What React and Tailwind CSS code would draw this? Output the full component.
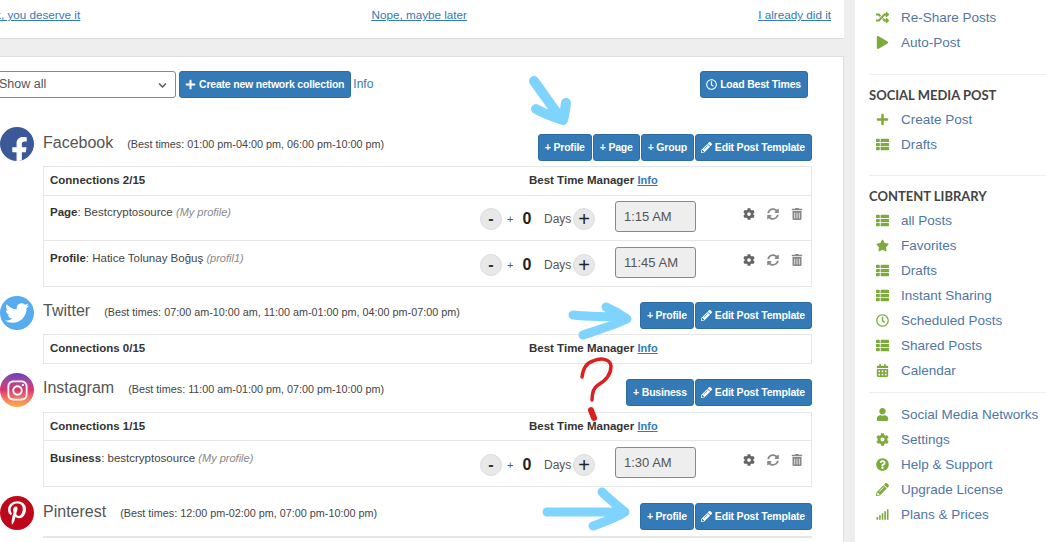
import React from 'react'
import {
  FaRandom, FaPlay, FaPlus, FaThList, FaStar, FaRegClock, FaCalendarAlt, FaUser, FaCog,
  FaQuestionCircle, FaPencilAlt, FaSignal, FaSyncAlt, FaTrashAlt, FaFacebookF, FaTwitter,
  FaInstagram, FaPinterestP, FaChevronDown,
} from 'react-icons/fa'

const networks = [
  {
    name: 'Facebook', times: '01:00 pm-04:00 pm, 06:00 pm-10:00 pm', used: '2/15',
    icon: <FaFacebookF className="text-white text-[27px] translate-x-[2px] translate-y-[6px]" />,
    iconBg: 'bg-[#3b5998]', head: 'h-[35px] mb-[4px]', titleTop: 'mt-[7px]', timesTop: 'mt-[10px]', btnBottom: 'mb-[1px]', hdr: 'h-[28px]', buttons: ['+ Profile', '+ Page', '+ Group'],
    rows: [
      { type: 'Page', name: 'Bestcryptosource', note: 'My profile', time: '1:15 AM', size: 'h-[45px] pt-[8px]' },
      { type: 'Profile', name: 'Hatice Tolunay Boğuş', note: 'profil1', time: '11:45 AM', size: 'h-[46px] pt-[9px]' },
    ],
  },
  {
    name: 'Twitter', times: '07:00 am-10:00 am, 11:00 am-01:00 pm, 04:00 pm-07:00 pm', used: '0/15',
    icon: <FaTwitter className="text-white text-[24px]" />,
    iconBg: 'bg-[#55acee]', head: 'h-[34px] mb-[4px]', titleTop: 'mt-[6px]', timesTop: 'mt-[9px]', btnBottom: 'mb-[1px]', hdr: 'h-[28px]', buttons: ['+ Profile'], rows: [],
  },
  {
    name: 'Instagram', times: '11:00 am-01:00 pm, 07:00 pm-10:00 pm', used: '1/15',
    icon: <FaInstagram className="text-white text-[23px]" />,
    iconBg: 'bg-gradient-to-t from-[#fcb045] via-[#e1306c] to-[#6a3fbf]', head: 'h-[35px] mb-[4px]', titleTop: 'mt-[6px]', timesTop: 'mt-[9px]', btnBottom: 'mb-[2px]', hdr: 'h-[27px]', buttons: ['+ Business'],
    rows: [{ type: 'Business', name: 'bestcryptosource', note: 'My profile', time: '1:30 AM', size: 'h-[46px] pt-[9px]' }],
  },
  {
    name: 'Pinterest', times: '12:00 pm-02:00 pm, 07:00 pm-10:00 pm', used: null,
    icon: <FaPinterestP className="text-white text-[24px]" />,
    iconBg: 'bg-[#bd081c]', head: 'h-[35px] mb-[5px]', titleTop: 'mt-[7px]', timesTop: 'mt-[10px]', btnBottom: 'mb-[1px]', buttons: ['+ Profile'], rows: [],
  },
]

const sidebar = [
  {
    gap: 'pb-[19px] mb-[9px] border-b',
    items: [
      { icon: FaRandom, label: 'Re-Share Posts' },
      { icon: FaPlay, label: 'Auto-Post' },
    ],
  },
  {
    title: 'SOCIAL MEDIA POST',
    gap: 'pb-[18px] mb-[9px] border-b',
    items: [
      { icon: FaPlus, label: 'Create Post' },
      { icon: FaThList, label: 'Drafts' },
    ],
  },
  {
    title: 'CONTENT LIBRARY',
    gap: 'pb-[9px] mb-[9px] border-b',
    items: [
      { icon: FaThList, label: 'all Posts' },
      { icon: FaStar, label: 'Favorites' },
      { icon: FaThList, label: 'Drafts' },
      { icon: FaThList, label: 'Instant Sharing' },
      { icon: FaRegClock, label: 'Scheduled Posts' },
      { icon: FaThList, label: 'Shared Posts' },
      { icon: FaCalendarAlt, label: 'Calendar' },
    ],
  },
  {
    gap: '',
    items: [
      { icon: FaUser, label: 'Social Media Networks' },
      { icon: FaCog, label: 'Settings' },
      { icon: FaQuestionCircle, label: 'Help & Support' },
      { icon: FaPencilAlt, label: 'Upgrade License' },
      { icon: FaSignal, label: 'Plans & Prices' },
    ],
  },
]

function BlueButton({ children, className = 'pl-[6px]' }) {
  return (
    <button className={`h-[27px] pr-[6px] flex items-center gap-[3px] whitespace-nowrap bg-[#337ab7] border border-[#2e6da4] rounded-[3px] text-white text-[10.5px] font-bold tracking-[-0.2px] ${className}`}>
      {children}
    </button>
  )
}

function ConnectionRow({ row }) {
  return (
    <div className={`flex border-t border-[#e6e6e6] text-[11.5px] ${row.size}`}>
      <div className="w-[436px] pl-[6px] text-[#444]">
        <b className="text-[#333]">{row.type}</b>: {row.name} <i className="text-[11px] text-[#888]">({row.note})</i>
      </div>
      <div className="flex items-center self-start mt-[4px] h-[22px]">
        <span className="w-[22px] h-[22px] flex items-center justify-center rounded-full bg-[#e8e8e8] border border-[#ddd] text-[16px] font-bold text-[#333]">-</span>
        <span className="ml-[5px] w-[8px] text-[11px] text-[#555]">+</span>
        <span className="ml-[6px] w-[12px] text-center text-[16px] font-bold text-[#222]">0</span>
        <span className="ml-[11px] w-[29px] text-[12px] text-[#555]">Days</span>
        <span className="w-[22px] h-[22px] flex items-center justify-center rounded-full bg-[#e8e8e8] border border-[#ddd] text-[20px] leading-none text-[#222]">+</span>
      </div>
      <div className="ml-[20px] -mt-[3px] w-[81px] h-[31px] pl-[8px] flex items-center bg-[#eee] border border-[#888] rounded-[3px] text-[13px] text-[#555]">
        {row.time}
      </div>
      <div className="ml-[47px] mt-[3px] flex items-center gap-[12px] h-[14px] text-[#888]">
        <FaCog className="text-[12px] text-[#666]" />
        <FaSyncAlt className="text-[12px]" />
        <FaTrashAlt className="text-[12px]" />
      </div>
    </div>
  )
}

function NetworkSection({ network }) {
  return (
    <section className="mb-[9px]">
      <div className={`flex items-end justify-between pr-[31px] ${network.head}`}>
        <div className="flex items-start h-full">
          <span className={`w-[34px] h-[34px] flex items-center justify-center overflow-hidden rounded-full ${network.iconBg}`}>
            {network.icon}
          </span>
          <span className={`ml-[9px] text-[16px] leading-[18px] text-[#555] ${network.titleTop}`}>{network.name}</span>
          <span className={`ml-[14px] text-[10.8px] leading-[14px] text-[#444] ${network.timesTop}`}>(Best times: {network.times})</span>
        </div>
        <div className={`flex gap-[1px] ${network.btnBottom}`}>
          {network.buttons.map(label => <BlueButton key={label}>{label}</BlueButton>)}
          <BlueButton className="pl-[5px]"><FaPencilAlt className="text-[11px]" /> Edit Post Template</BlueButton>
        </div>
      </div>
      <div className="ml-[43px] mr-[31px] border border-[#e6e6e6]">
        {network.used && (
          <div className={`flex items-center text-[11.5px] font-bold text-[#333] ${network.hdr}`}>
            <span className="w-[485px] pl-[6px]">Connections {network.used}</span>
            <span>Best Time Manager <a href="#" className="text-[11px] text-[#337ab7] underline">Info</a></span>
          </div>
        )}
        {network.rows.map(row => <ConnectionRow key={row.name} row={row} />)}
      </div>
    </section>
  )
}

function Sidebar() {
  return (
    <aside className="flex-1 h-full bg-white pl-[14px] pt-[5px]">
      {sidebar.map((group, i) => (
        <div key={i} className={`border-[#eee] ${group.gap}`}>
          {group.title && <h4 className="h-[23px] font-['Lato',sans-serif] text-[13px] leading-[23px] font-bold text-[#444]">{group.title}</h4>}
          {group.items.map((item, j) => (
            <a key={j} href="#" className="flex items-center h-[25px] text-[13.5px] text-[#4f77a5]">
              <span className="w-[32px] pl-[7px] text-[#7cab3c]"><item.icon className="text-[13px]" /></span>
              <span className="pt-[2px]">{item.label}</span>
            </a>
          ))}
        </div>
      ))}
    </aside>
  )
}

export default function App() {
  return (
    <div className="relative flex w-[1046px] h-[542px] overflow-hidden bg-[#eee] font-['Liberation_Sans',Arial,sans-serif]">
      <main className="w-[844px] shrink-0 mr-[11px]">
        <div className="flex justify-between h-[39px] pt-[6px] pr-[13px] -ml-[14px] bg-white border-b border-[#ddd] text-[11.7px] text-[#337ab7] underline">
          <a href="#">Ok, you deserve it</a>
          <a href="#">Nope, maybe later</a>
          <a href="#">I already did it</a>
        </div>
        <div className="mt-[17px] h-[486px] bg-white border-t border-r border-[#ddd] pt-[14px]">
          <div className="flex items-center justify-between h-[27px] pr-[35px]">
            <div className="flex items-center">
              <div className="relative w-[180px] -ml-[4px] shrink-0">
                <select className="w-[180px] h-[27px] pl-[2px] appearance-none bg-white border border-[#888] rounded-[3px] text-[12.5px] text-[#555]">
                  <option>Show all</option>
                </select>
                <FaChevronDown className="absolute right-[9px] top-[10px] text-[9px] text-[#555]" />
              </div>
              <BlueButton className="ml-[3px] pl-[5px]"><FaPlus className="text-[11px]" /> Create new network collection</BlueButton>
              <a href="#" className="ml-[2px] -mt-[2px] text-[12px] text-[#337ab7]">Info</a>
            </div>
            <BlueButton className="pl-[5px]"><FaRegClock className="text-[11px]" /> Load Best Times</BlueButton>
          </div>
          <div className="mt-[29px]">
            {networks.map(network => <NetworkSection key={network.name} network={network} />)}
          </div>
        </div>
      </main>
      <Sidebar />
      {/* hand drawn marks on top of the screenshot */}
      <svg className="absolute inset-0 pointer-events-none" width="1046" height="542" fill="none" strokeLinecap="round" strokeLinejoin="round">
        <g stroke="#7fd3ff">
          <path d="M534 81 C544 95 552 106 561 119 M536 109 C545 114 553 117 563 120 C565 114 565 108 566 103" strokeWidth="10" />
          <path d="M573 315 C590 317 608 316 626 318 M606 307 C613 310 620 314 627 319 C614 325 598 330 583 335" strokeWidth="9" />
          <path d="M547 512 C572 512 600 512 625 512 M602 492 C610 500 618 506 625 512 C616 518 604 522 593 526" strokeWidth="9" />
        </g>
        <path d="M582 377 C583 369 586 363 593 361 C600 358 610 358 611 366 C611 375 605 381 598 385 C593 388 592 393 592 400" stroke="#dc1f1f" strokeWidth="3.5" />
        <path d="M591 410 L594 418" stroke="#dc1f1f" strokeWidth="6" />
      </svg>
    </div>
  )
}
